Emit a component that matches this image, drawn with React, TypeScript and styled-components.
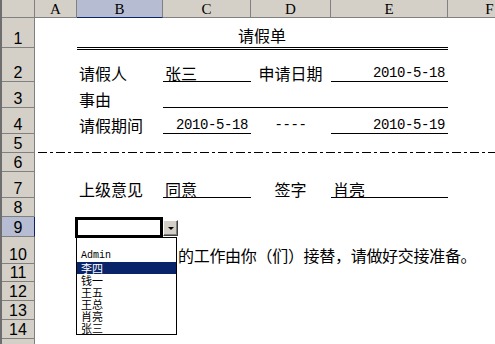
import React from 'react';
import styled, { createGlobalStyle, css } from 'styled-components';

const GlobalStyle = createGlobalStyle`
  html, body {
    margin: 0;
    padding: 0;
    background: #fff;
    overflow: hidden;
  }
`;

const COLS = ['A', 'B', 'C', 'D', 'E', 'F'];
const ROW_HEIGHTS = [30, 34, 26, 26, 19, 19, 26, 19, 20, 27, 18, 19, 19, 19, 19];
const PICK_LIST = ['', 'Admin', '李四', '钱一', '王五', '王总', '肖亮', '张三'];

const Sheet = styled.div`
  display: grid;
  grid-template-columns: 33px 42px 86px 88px 80px 117px 84px;
  grid-template-rows: 18px ${ROW_HEIGHTS.map((h) => `${h}px`).join(' ')};
  width: 493px;
  height: 344px;
  overflow: hidden;
  border-left: 2px solid #6e6e6e;
  background: #fff;
  color: #000;
  font-family: 'Noto Sans CJK SC', sans-serif;
  font-size: 16px;
`;

const headBase = css`
  box-sizing: border-box;
  background: #d4d0c8;
  border-right: 1px solid #808080;
  border-bottom: 1px solid #808080;
  display: flex;
  justify-content: center;
`;

const Corner = styled.div`
  ${headBase};
  grid-column: 1;
  grid-row: 1;
`;

const ColHead = styled.div<{ $c: number; $active?: boolean }>`
  ${headBase};
  grid-column: ${(p) => p.$c};
  grid-row: 1;
  align-items: center;
  padding-top: 2px;
  font-family: 'Liberation Serif', serif;
  font-size: 15px;
  line-height: 15px;
  ${(p) =>
    p.$active &&
    css`
      background: #b6bdd2;
      border-bottom-color: #0a246a;
    `}
`;

const RowHead = styled.div<{ $r: number; $active?: boolean }>`
  ${headBase};
  grid-column: 1;
  grid-row: ${(p) => p.$r};
  align-items: flex-end;
  font-family: 'Liberation Sans Narrow', 'Liberation Sans', sans-serif;
  font-size: 16px;
  line-height: 16px;
  ${(p) =>
    p.$active &&
    css`
      background: #b6bdd2;
      border-right-color: #0a246a;
    `}
`;

const Cell = styled.div<{
  $c: number;
  $r: number;
  $span?: number;
  $align?: 'left' | 'center' | 'right';
  $line?: boolean;
}>`
  grid-column: ${(p) => p.$c} / span ${(p) => p.$span ?? 1};
  grid-row: ${(p) => p.$r};
  box-sizing: border-box;
  display: flex;
  align-items: flex-end;
  justify-content: ${(p) =>
    p.$align === 'right' ? 'flex-end' : p.$align === 'center' ? 'center' : 'flex-start'};
  padding: 0 3px 1px 2px;
  line-height: 16px;
  white-space: nowrap;
  ${(p) =>
    p.$line &&
    css`
      border-bottom: 1px solid #000;
      padding-bottom: 0;
    `}
`;

const TitleCell = styled(Cell)`
  border-bottom: 3px double #000;
  margin-bottom: -2px;
  padding-bottom: 4px;
`;

const Num = styled.span`
  font-family: 'Liberation Mono', monospace;
  font-size: 14px;
  letter-spacing: -0.4px;
  line-height: 16px;
`;

const DashRule = styled.div`
  grid-column: 2 / -1;
  grid-row: 6;
  align-self: end;
  height: 1px;
  margin-left: 3px;
  background: repeating-linear-gradient(
    to right,
    #000 0 9px,
    transparent 9px 12px,
    #000 12px 15px,
    transparent 15px 18px
  );
`;

const NoteCell = styled(Cell)`
  padding-left: 15px;
  letter-spacing: -0.3px;
`;

const ActiveCell = styled(Cell)`
  position: relative;
  z-index: 2;
`;

const Selection = styled.span`
  position: absolute;
  left: -2px;
  top: 0;
  right: 0;
  bottom: -1px;
  border: 3px solid #000;
`;

const DropButton = styled.span`
  position: absolute;
  left: 100%;
  bottom: 1px;
  width: 15px;
  height: 16px;
  box-sizing: border-box;
  background: #d4d0c8;
  border: 1px solid;
  border-color: #fff #404040 #404040 #fff;
  box-shadow: inset -1px -1px #808080;
  display: flex;
  align-items: center;
  justify-content: center;

  &::after {
    content: '';
    width: 0;
    height: 0;
    border-left: 3px solid transparent;
    border-right: 3px solid transparent;
    border-top: 3px solid #000;
  }
`;

const ListBox = styled.div`
  position: absolute;
  left: -1px;
  top: 100%;
  width: 101px;
  box-sizing: border-box;
  border: 1px solid #000;
  background: #fff;
  z-index: 3;
`;

const ListItem = styled.div<{ $selected?: boolean; $latin?: boolean }>`
  height: 12px;
  display: flex;
  align-items: center;
  padding-left: 4px;
  font-family: ${(p) =>
    p.$latin ? "'Liberation Mono', monospace" : "'Noto Sans CJK SC', sans-serif"};
  font-size: ${(p) => (p.$latin ? '10px' : '11px')};
  line-height: 12px;
  color: ${(p) => (p.$selected ? '#fff' : '#000')};
  background: ${(p) => (p.$selected ? '#0a246a' : 'transparent')};
`;

const App = () => {
  return (
    <>
      <GlobalStyle />
      <Sheet>
        <Corner />
        {COLS.map((c, i) => (
          <ColHead key={c} $c={i + 2} $active={c === 'B'}>
            {c}
          </ColHead>
        ))}
        {ROW_HEIGHTS.map((_, i) => (
          <RowHead key={i} $r={i + 2} $active={i + 1 === 9}>
            {i + 1 < 15 ? i + 1 : ''}
          </RowHead>
        ))}

        <TitleCell $c={3} $r={2} $span={4} $align='center'>
          请假单
        </TitleCell>

        <Cell $c={3} $r={3}>请假人</Cell>
        <Cell $c={4} $r={3} $line>张三</Cell>
        <Cell $c={5} $r={3} $align='center'>申请日期</Cell>
        <Cell $c={6} $r={3} $align='right' $line>
          <Num>2010-5-18</Num>
        </Cell>

        <Cell $c={3} $r={4}>事由</Cell>
        <Cell $c={4} $r={4} $span={3} $line />

        <Cell $c={3} $r={5}>请假期间</Cell>
        <Cell $c={4} $r={5} $align='right' $line>
          <Num>2010-5-18</Num>
        </Cell>
        <Cell $c={5} $r={5} $align='center'>
          <Num>----</Num>
        </Cell>
        <Cell $c={6} $r={5} $align='right' $line>
          <Num>2010-5-19</Num>
        </Cell>

        <DashRule />

        <Cell $c={3} $r={8}>上级意见</Cell>
        <Cell $c={4} $r={8} $line>同意</Cell>
        <Cell $c={5} $r={8} $align='center'>签字</Cell>
        <Cell $c={6} $r={8} $line>肖亮</Cell>

        <ActiveCell $c={3} $r={10}>
          <Selection />
          <DropButton />
          <ListBox>
            {PICK_LIST.map((name, i) => (
              <ListItem key={i} $latin={name === 'Admin'} $selected={name === '李四'}>
                {name}
              </ListItem>
            ))}
          </ListBox>
        </ActiveCell>

        <NoteCell $c={4} $r={11} $span={4}>
          的工作由你（们）接替，请做好交接准备。
        </NoteCell>
      </Sheet>
    </>
  );
};

export default App;
